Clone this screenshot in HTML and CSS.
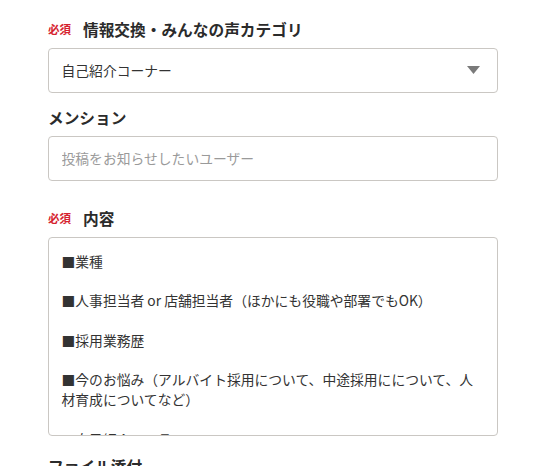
FILE: index.html
```html
<!DOCTYPE html>
<html lang="ja">
<head>
<meta charset="utf-8">
<title>投稿フォーム</title>
<link rel="stylesheet" href="styles.css">
</head>
<body>
<form class="form">
  <div class="field field-category">
    <div class="label-row">
      <span class="required">必須</span>
      <span class="label">情報交換・みんなの声カテゴリ</span>
    </div>
    <div class="select">
      <span class="select-value">自己紹介コーナー</span>
      <svg class="caret" width="13" height="8" viewBox="0 0 13 8"><path d="M0 0H13L6.5 8Z" fill="#7a7a7a"/></svg>
    </div>
  </div>
  <div class="field field-mention">
    <div class="label-row">
      <span class="label">メンション</span>
    </div>
    <input class="input" type="text" placeholder="投稿をお知らせしたいユーザー">
  </div>
  <div class="field field-content">
    <div class="label-row">
      <span class="required">必須</span>
      <span class="label">内容</span>
    </div>
    <textarea class="textarea">■業種

■人事担当者 or 店舗担当者（ほかにも役職や部署でもOK）

■採用業務歴

■今のお悩み（アルバイト採用について、中途採用にについて、人材育成についてなど）

■自己紹介・一言</textarea>
  </div>
  <div class="field field-file">
    <div class="label-row">
      <span class="label">ファイル添付</span>
    </div>
  </div>
</form>
</body>
</html>
```

FILE: styles.css
```css
html, body {
  margin: 0;
  padding: 0;
  background: #fff;
}
body {
  font-family: "Noto Sans CJK JP", "Noto Sans", sans-serif;
  color: #333;
  overflow: hidden;
  height: 466px;
}
.form {
  padding: 17.5px 0 0 48px;
  width: 450px;
}
.field {
  display: flex;
  flex-direction: column;
}
.field-mention { margin-top: 13px; }
.field-content { margin-top: 25.5px; }
.field-file { margin-top: 19px; }
.label-row {
  display: flex;
  align-items: center;
  gap: 12px;
  height: 24px;
  margin-bottom: 6px;
}
.required {
  font-size: 11.5px;
  font-weight: 700;
  color: #d5232f;
  line-height: 1;
}
.label {
  font-size: 15.7px;
  font-weight: 700;
  color: #2b2b2b;
  line-height: 24px;
}
.select, .input, .textarea {
  box-sizing: border-box;
  width: 450px;
  border: 1px solid #cac7c3;
  border-radius: 4px;
  background: #fff;
  font-family: "Noto Sans CJK JP", "Noto Sans", sans-serif;
  font-size: 13.8px;
  color: #333;
}
.select {
  height: 45px;
  display: flex;
  align-items: center;
  justify-content: space-between;
  padding: 0 17px 0 12.5px;
}
.select-value { line-height: 20px; }
.caret { display: block; }
.input {
  height: 45.5px;
  padding: 0 12.5px;
  outline: none;
}
.input::placeholder { color: #9a9a9a; }
.textarea {
  display: block;
  height: 199px;
  padding: 14px 12px 0 12.5px;
  line-height: 19.8px;
  resize: none;
  overflow: hidden;
  outline: none;
  margin: 0;
}
```
